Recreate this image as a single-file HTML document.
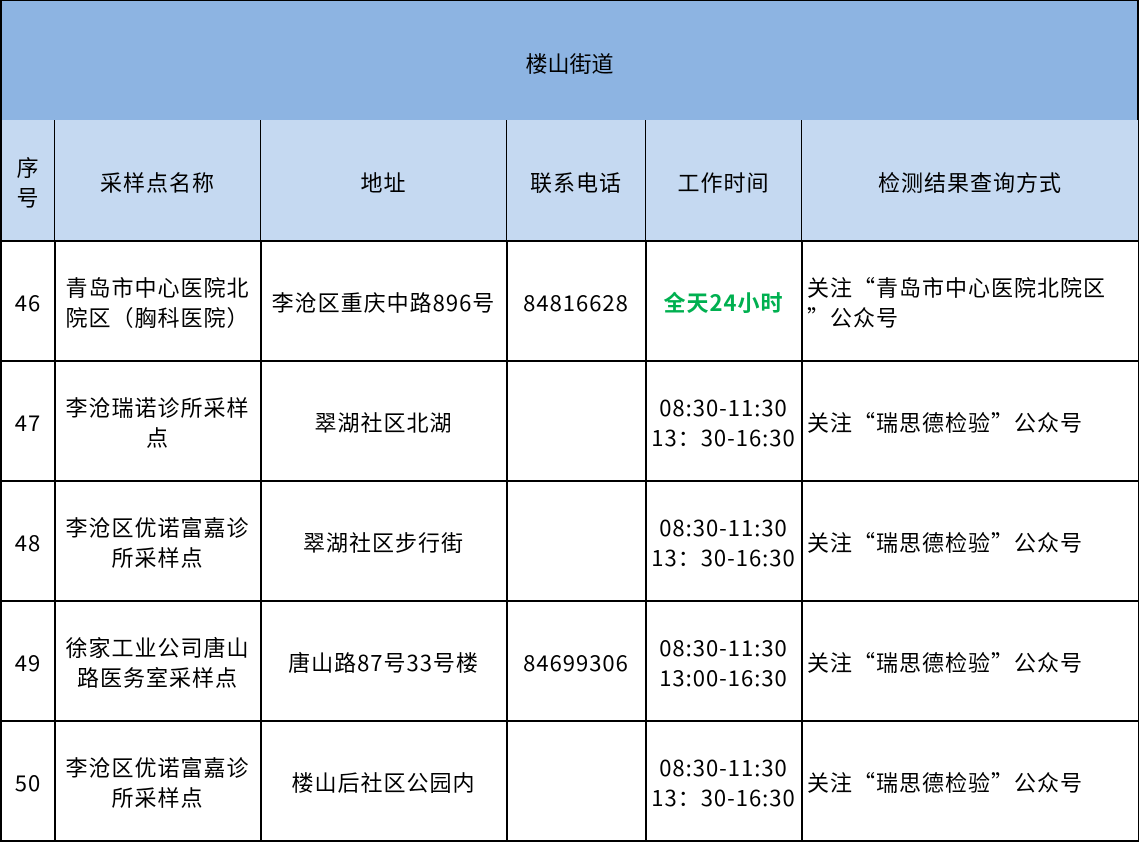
<!DOCTYPE html>
<html><head><meta charset="utf-8"><style>
body{margin:0;width:1139px;height:841px;background:#fff;overflow:hidden;font-family:"Noto Sans CJK SC","Liberation Sans",sans-serif;color:#000}
.c{position:absolute;box-sizing:border-box;display:flex;align-items:center;justify-content:center;text-align:center;font-size:22px;line-height:30px;border-right:2px solid #000;border-bottom:2px solid #000;padding-top:4px}
.c>div{letter-spacing:1px}
.l{justify-content:flex-start;text-align:left;padding-left:5px}
</style></head><body>
<div class="c" style="left:0;top:0;width:1139px;height:122px;background:#8db4e2;border-left:2px solid #000;border-top:1px solid #000">楼山街道</div>
<div id="g"></div>
<script>
var X=[0,55,261,507,646,802,1139];
var rows=[
["序<br>号","采样点名称","地址","联系电话","工作时间","检测结果查询方式"],
["46","青岛市中心医院北<br>院区（胸科医院）","李沧区重庆中路896号","84816628","<b style='color:#00b050'>全天24小时</b>","关注“青岛市中心医院北院区<br>”公众号"],
["47","李沧瑞诺诊所采样<br>点","翠湖社区北湖","","08:30-11:30<br>13：30-16:30","关注“瑞思德检验”公众号"],
["48","李沧区优诺富嘉诊<br>所采样点","翠湖社区步行街","","08:30-11:30<br>13：30-16:30","关注“瑞思德检验”公众号"],
["49","徐家工业公司唐山<br>路医务室采样点","唐山路87号33号楼","84699306","08:30-11:30<br>13:00-16:30","关注“瑞思德检验”公众号"],
["50","李沧区优诺富嘉诊<br>所采样点","楼山后社区公园内","","08:30-11:30<br>13：30-16:30","关注“瑞思德检验”公众号"]];
var h="";
rows.forEach(function(r,i){var y=120+i*120;r.forEach(function(t,j){
var st="left:"+X[j]+"px;top:"+y+"px;width:"+(X[j+1]-X[j]+1)+"px;height:122px;";
if(j==0)st+="border-left:2px solid #000;";
if(i==0)st+="background:#c5d9f1;";
var cls="c"+((j==5&&i>0)?" l":"");
h+='<div class="'+cls+'" style="'+st+'"><div>'+t+'</div></div>';});});
document.getElementById("g").innerHTML=h;
</script>
</body></html>
